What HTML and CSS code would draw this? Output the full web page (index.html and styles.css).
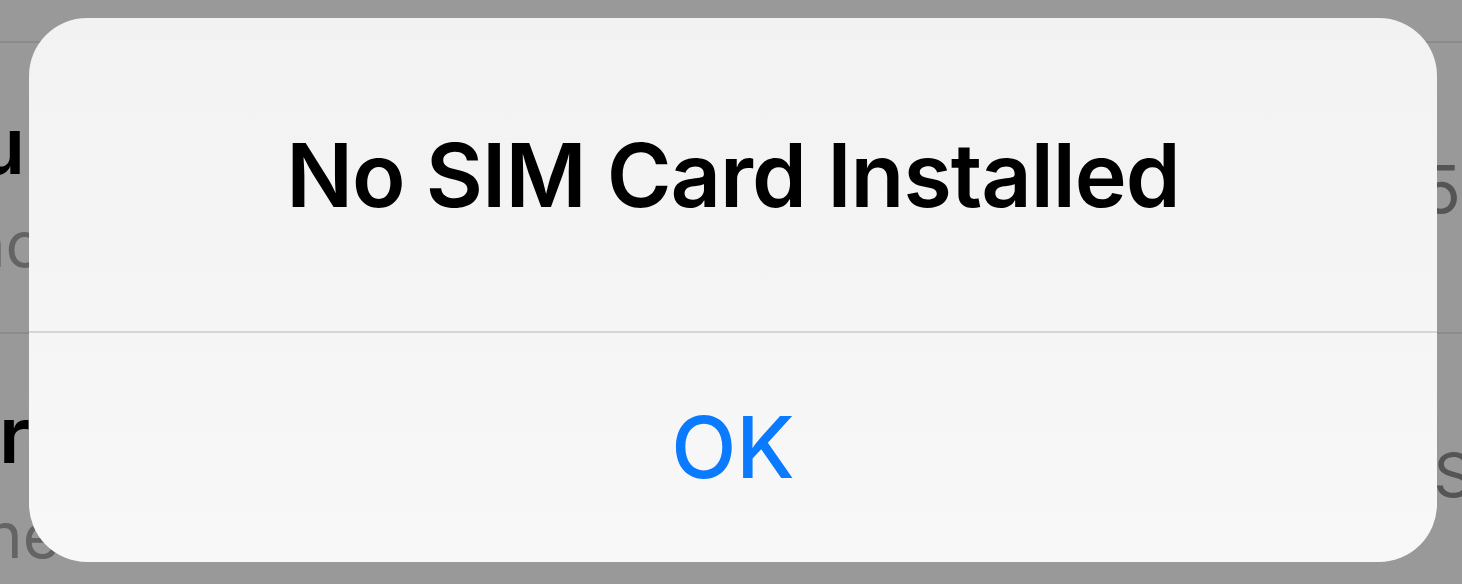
FILE: index.html
```html
<!DOCTYPE html>
<html lang="en">
<head>
<meta charset="utf-8">
<title>No SIM Card Installed</title>
<link rel="stylesheet" href="styles.css">
</head>
<body>
<div class="screen">
  <div class="backdrop">
    <div class="row row-top"></div>
    <div class="row row-a">
      <div class="left">
        <div class="cell cell-title-a"><span class="title">Menu</span></div>
        <div class="cell cell-sub-a"><span class="sub">Franc</span></div>
      </div>
      <div class="right right-a"><span class="time">15</span></div>
    </div>
    <div class="row row-b">
      <div class="left">
        <div class="cell cell-title-b"><span class="title">Dinner</span></div>
        <div class="cell cell-sub-b"><span class="sub">The</span></div>
      </div>
      <div class="right right-b"><span class="time small">PS</span></div>
    </div>
  </div>

  <div class="alert" role="alertdialog" aria-labelledby="alert-title">
    <div class="alert-body">
      <h1 class="alert-title" id="alert-title">No SIM Card Installed</h1>
    </div>
    <div class="alert-divider"></div>
    <button class="alert-button" type="button">OK</button>
  </div>
</div>
</body>
</html>
```

FILE: styles.css
```css
html, body {
  margin: 0;
  padding: 0;
}

body {
  background: #999999;
  font-family: Inter, "Noto Sans", "Liberation Sans", sans-serif;
}

.screen {
  position: relative;
  width: 1462px;
  height: 584px;
  overflow: hidden;
  background: #999999;
}

/* ---------- list behind the alert ---------- */
.backdrop {
  display: flex;
  flex-direction: column;
  height: 584px;
}

.row {
  display: flex;
  justify-content: space-between;
  border-bottom: 2px solid #8b8b8b;
  box-sizing: border-box;
}

.row-top {
  height: 43px;
}

.row-a {
  height: 291px;
}

.row-b {
  flex: 1;
  border-bottom: none;
}

.left {
  display: flex;
  flex-direction: column;
}

.cell {
  display: flex;
  justify-content: flex-end;
  white-space: nowrap;
}

.title {
  font-size: 78px;
  line-height: 78px;
  font-weight: 600;
  color: #000;
}

.sub {
  font-size: 64px;
  line-height: 64px;
  font-weight: 400;
  color: #646464;
}

.cell-title-a {
  width: 25px;
  margin-top: 64px;
}

.cell-sub-a {
  width: 42px;
  margin-top: 27px;
}

.cell-title-b {
  width: 30px;
  margin-top: 62px;
}

.cell-sub-b {
  width: 60px;
  margin-top: 29px;
}

.right {
  display: flex;
  justify-content: flex-start;
  width: 68px;
  white-space: nowrap;
}

.time {
  font-size: 66px;
  line-height: 66px;
  font-weight: 400;
  color: #555;
}

.time.small {
  font-size: 62px;
  line-height: 62px;
}

.right-a {
  margin-top: 113px;
  height: 66px;
}

.right-b {
  margin-top: 110px;
  height: 62px;
}

/* ---------- the alert ---------- */
.alert {
  position: absolute;
  left: 29px;
  top: 18px;
  width: 1408px;
  height: 544px;
  border-radius: 58px;
  background: linear-gradient(#f2f2f2, #f8f8f8);
  display: flex;
  flex-direction: column;
  overflow: hidden;
}

.alert-body {
  height: 313px;
  display: flex;
  align-items: center;
  justify-content: center;
}

.alert-title {
  margin: 0;
  font-size: 88px;
  line-height: 88px;
  font-weight: 600;
  color: #000;
  letter-spacing: -1px;
}

.alert-divider {
  height: 2px;
  background: #d6d6d6;
}

.alert-button {
  flex: 1;
  border: none;
  background: transparent;
  padding: 0;
  margin: 0;
  font-family: inherit;
  font-size: 85px;
  line-height: 85px;
  font-weight: 500;
  color: #0a7aff;
  display: flex;
  align-items: center;
  justify-content: center;
}
```
